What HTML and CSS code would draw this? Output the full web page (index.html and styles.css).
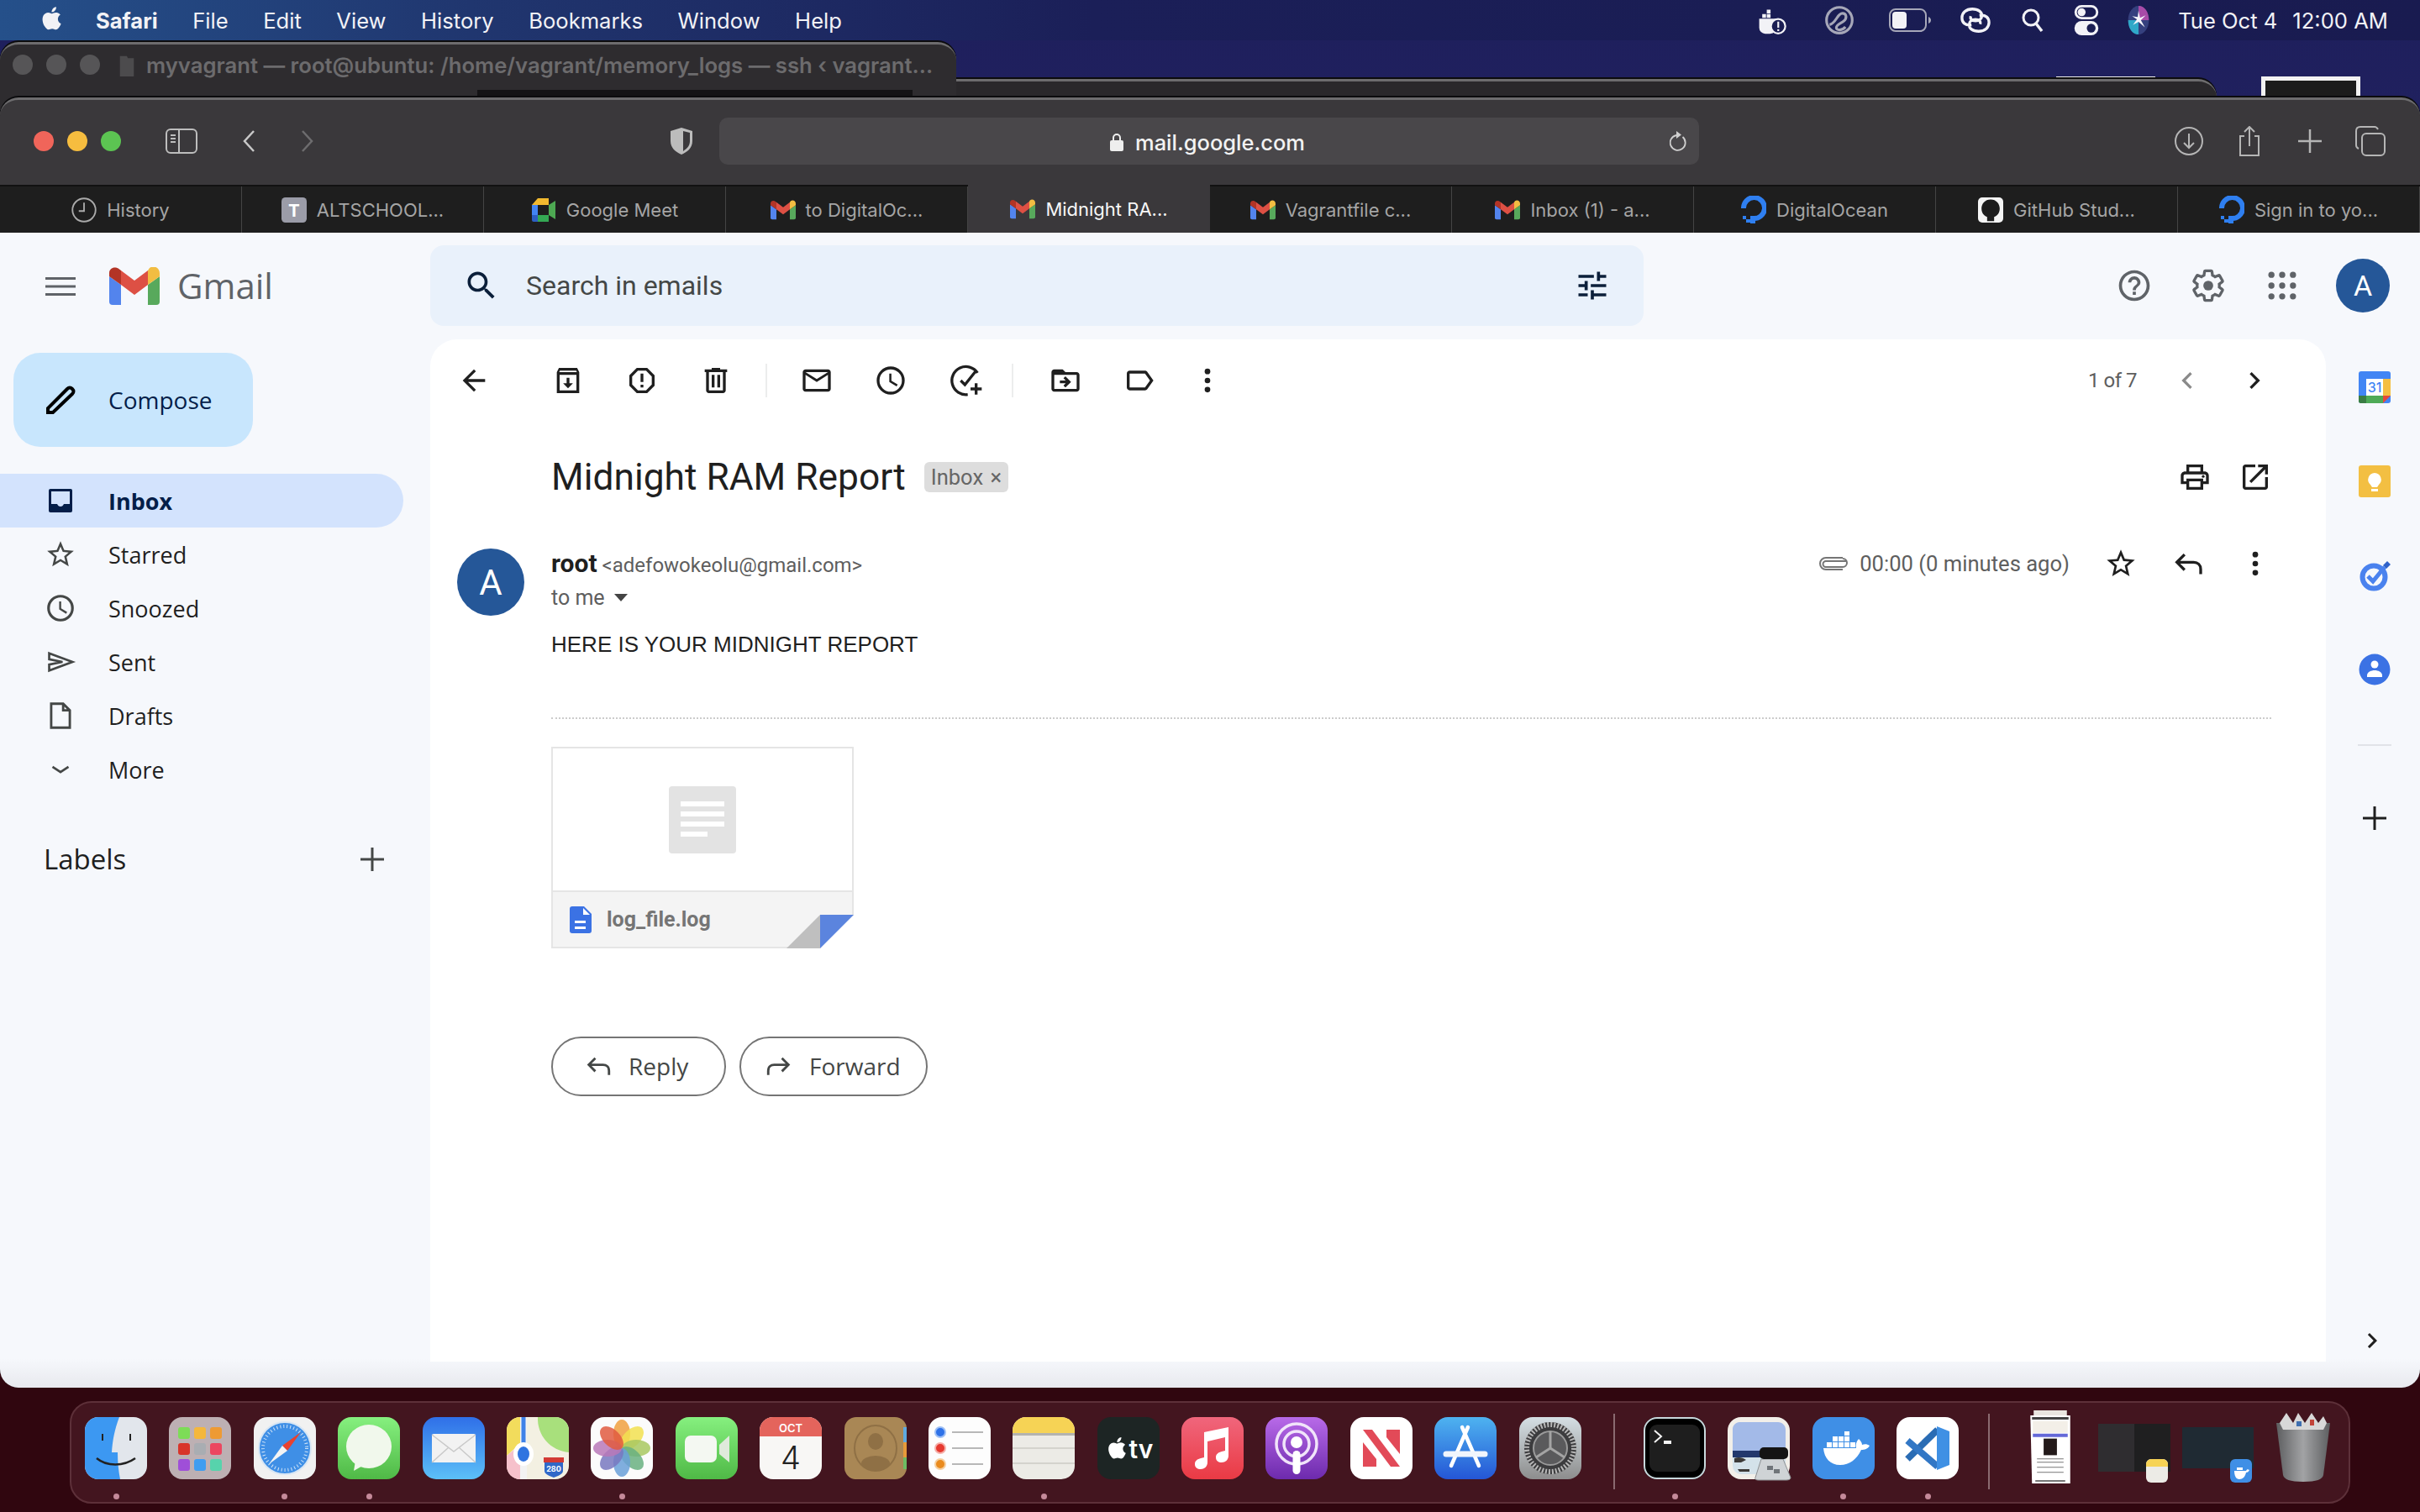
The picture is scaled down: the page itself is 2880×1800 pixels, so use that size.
FILE: index.html
```html
<!DOCTYPE html>
<html>
	<head>
		<meta charset="utf-8">
		<title>Midnight RAM Report</title>
		<link rel="stylesheet" href="styles.css">
	</head>

	<body>
		<svg class="defs" width="0" height="0">
			<defs>
				<linearGradient id="g-green" x1="0" y1="0" x2="0" y2="1"><stop offset="0" stop-color="#86f07f"/><stop offset="1" stop-color="#4fb946"/></linearGradient>
				<linearGradient id="g-mail" x1="0" y1="0" x2="0" y2="1"><stop offset="0" stop-color="#2f6fe8"/><stop offset="1" stop-color="#5cc0f8"/></linearGradient>
				<linearGradient id="g-music" x1="0" y1="0" x2="0" y2="1"><stop offset="0" stop-color="#f0667c"/><stop offset="1" stop-color="#ea3a44"/></linearGradient>
				<linearGradient id="g-pod" x1="0" y1="0" x2="0" y2="1"><stop offset="0" stop-color="#b86ae8"/><stop offset="1" stop-color="#6d2aad"/></linearGradient>
				<linearGradient id="g-store" x1="0" y1="0" x2="0" y2="1"><stop offset="0" stop-color="#4eb3f0"/><stop offset="1" stop-color="#2456d6"/></linearGradient>
				<linearGradient id="g-pref" x1="0" y1="0" x2="0" y2="1"><stop offset="0" stop-color="#d5dfe4"/><stop offset="1" stop-color="#8d8d8d"/></linearGradient>
				<linearGradient id="g-trash" x1="0" y1="0" x2="1" y2="0"><stop offset="0" stop-color="#5d5e60"/><stop offset=".5" stop-color="#a2a3a5"/><stop offset="1" stop-color="#5d5e60"/></linearGradient>
				<path id="apple" d="M18.700 12.600c0-2.600 2.100-3.800 2.200-3.900-1.200-1.800-3.100-2-3.700-2-1.600-.2-3.100.9-3.900.9s-2-.9-3.300-.9c-1.700 0-3.300 1-4.200 2.500-1.800 3.100-.5 7.700 1.300 10.200.9 1.200 1.900 2.600 3.200 2.600 1.300-.1 1.800-.8 3.300-.8s2 .8 3.300.8 2.200-1.200 3.100-2.500c1-1.400 1.400-2.800 1.400-2.900 0 0-2.700-1-2.700-4zM16.100 4.900c.7-.9 1.200-2.100 1.100-3.300-1 0-2.300.7-3 1.600-.6.800-1.200 2-1.100 3.200 1.200.1 2.300-.6 3-1.500z"/>
				<g id="m-logo">
					<path fill="#5384ed" d="M4 45h10V21L0 11v30a4 4 0 0 0 4 4z"/>
					<path fill="#58a95c" d="M46 45h10a4 4 0 0 0 4-4V11L46 21z"/>
					<path fill="#f2bd42" d="M46 4v17l14-10V7c0-6-7-10-12-6z"/>
					<path fill="#dd5044" d="M14 21V4l16 12L46 4v17L30 33z"/>
					<path fill="#b33426" d="M0 7v4l14 10V4l-2-1.500C7-1.500 0 1 0 7z"/>
				</g>
				<g id="do-logo">
					<path fill="none" stroke="#2f7ff0" stroke-width="6" d="M14 26A12.500 12.500 0 1 0 3 14"/>
					<path fill="#2f7ff0" d="M11 23h6v9h-6zM6 27h5v4H6zM2 23h4v4H2z"/>
				</g>
				<path id="reply" fill="none" stroke-width="2" d="M21 19.500V16c0-3-2-5-5-5H4M9.500 5.500 4 11l5.500 5.500"/>
				<path id="forward" fill="none" stroke-width="2" d="M3 19.500V16c0-3 2-5 5-5h12M14.500 5.500 20 11l-5.500 5.500"/>
				<path id="chev" d="M10 6 8.590 7.410 13.170 12l-4.580 4.590L10 18l6-6z"/>
			</defs>
		</svg>

		<header class="menubar">
			<svg class="apple" viewBox="0 0 24 24"><use href="#apple"/></svg>
			<nav class="menubar-items">
				<b>Safari</b>
				<span>File</span>
				<span>Edit</span>
				<span>View</span>
				<span>History</span>
				<span>Bookmarks</span>
				<span>Window</span>
				<span>Help</span>
			</nav>
			<div class="status">
				<svg class="st st-docker" viewBox="0 0 40 40"><path d="M4 18h24v10a10 10 0 0 1-10 10H12A8 8 0 0 1 4 30zM8 12h5v5H8zM14 12h5v5h-5zM14 6h5v5h-5z"/><circle cx="29" cy="28" r="9.500" fill="#1a1d52" stroke="#f2f2f6" stroke-width="2.500"/><path d="M28 22h2.400v8H28zM28 32h2.400v2.400H28z"/></svg>
				<svg class="st st-cc" viewBox="0 0 40 40"><circle cx="20" cy="20" r="17" fill="none" stroke="#a6a7b8" stroke-width="3.500"/><path fill="none" stroke="#a6a7b8" stroke-width="3.500" d="M7 26c9-2 10-15 17-15 6 0 6 7 2 10-3 3-10 4-10 9 0 4 8 4 12-1"/></svg>
				<svg class="st st-batt" viewBox="0 0 50 28"><rect x="1" y="1" width="43" height="26" rx="7" fill="none" stroke="#a6a7b8" stroke-width="2"/><rect x="4" y="4" width="17" height="20" rx="4" fill="#f2f2f6"/><path d="M47 10c2 1 3 2 3 4s-1 3-3 4z" fill="#a6a7b8"/></svg>
				<svg class="st st-link" viewBox="0 0 38 38"><path fill="none" stroke="#f2f2f6" stroke-width="3.500" d="M14 25c-8 1-12-3-12-9S7 5 15 5s12 4 12 8-3 7-8 7-7-3-6-6M24 13c8-1 12 3 12 9s-5 11-13 11-12-4-12-8 3-7 8-7 7 3 6 6"/></svg>
				<svg class="st st-search" viewBox="0 0 26 28"><circle cx="11" cy="11" r="9" fill="none" stroke="#f2f2f6" stroke-width="3"/><path stroke="#f2f2f6" stroke-width="3.500" d="m17 18 7 9"/></svg>
				<svg class="st st-control" viewBox="0 0 30 38"><rect x="1.500" y="1.500" width="27" height="15" rx="7.500" fill="none" stroke="#f2f2f6" stroke-width="3"/><circle cx="9" cy="9" r="5" fill="#f2f2f6"/><rect y="20" width="30" height="18" rx="9" fill="#f2f2f6"/><circle cx="21" cy="29" r="5.500" fill="#1a1d52"/></svg>
				<svg class="st st-siri" viewBox="0 0 26 38"><ellipse cx="13" cy="19" rx="13" ry="18" fill="#35407e"/><path d="M13 1c8 0 13 8 13 18L13 19z" fill="#a74ba8"/><path d="M0 19c0 10 5 18 13 18V19z" fill="#2fa8c8"/><path d="M13 7l2 9 7-3-6 6 5 9-8-7-7 4 5-7-6-4 7 1z" fill="#f4f4fa"/></svg>
				<span class="clock">Tue Oct 4</span>
				<span class="clock-time">12:00 AM</span>
			</div>
		</header>

		<div class="thumb thumb-a"></div>
		<div class="thumb thumb-b"><i></i></div>
		<div class="win win-back"></div>
		<div class="win win-term">
			<i class="dot-grey"></i>
			<i class="dot-grey"></i>
			<i class="dot-grey"></i>
			<svg class="term-folder" viewBox="0 0 28 44"><path d="M0 3h14l2 4h12v37H0z"/></svg>
			<span class="term-title">myvagrant — root@ubuntu: /home/vagrant/memory_logs — ssh ‹ vagrant...</span>
			<div class="term-inner"></div>
		</div>

		<main class="win safari">
			<div class="sf-toolbar">
				<i class="light red"></i>
				<i class="light yellow"></i>
				<i class="light green"></i>
				<svg class="sf-side" viewBox="0 0 38 30"><rect x="1" y="1" width="36" height="28" rx="5" fill="none" stroke="#bdbdbd" stroke-width="2"/><path stroke="#bdbdbd" stroke-width="2" d="M16 1v28"/><path stroke="#bdbdbd" stroke-width="2" d="M6 8h6M6 12h6M6 16h6"/></svg>
				<svg class="sf-chev sf-back" viewBox="0 0 16 26"><path fill="none" stroke="#c8c8c8" stroke-width="2.500" d="M14 1 3 13l11 12"/></svg>
				<svg class="sf-chev sf-fwd" viewBox="0 0 16 26"><path fill="none" stroke="#6d6c6e" stroke-width="2.500" d="m2 1 11 12L2 25"/></svg>
				<svg class="sf-shield" viewBox="0 0 26 32"><path d="M13 0 26 4v12c0 8-6 13-13 16C6 29 0 24 0 16V4z" fill="#bcbcbc"/><path d="M15 4v24c4-3 8-6 8-12V6z" fill="#3a383b"/></svg>
				<div class="urlbar">
					<span class="url">
						<svg class="lock" viewBox="0 0 16 22"><path fill="none" stroke="#eee" stroke-width="2" d="M4 10V6a4 4 0 0 1 8 0v4"/><rect y="9" width="16" height="13" rx="2" fill="#eee"/></svg>
						mail.google.com
					</span>
					<svg class="reload" viewBox="0 0 20 24"><path fill="none" stroke="#cfcfcf" stroke-width="1.800" d="M15.500 7A9 9 0 1 1 8 5"/><path fill="#cfcfcf" d="M8 0v9l6-4.500z"/></svg>
				</div>
				<div class="sf-right">
					<svg viewBox="0 0 36 36"><circle cx="18" cy="18" r="16" fill="none" stroke="#b5b5b5" stroke-width="2"/><path fill="none" stroke="#b5b5b5" stroke-width="2" d="M18 9v17M12 20l6 6 6-6"/></svg>
					<svg viewBox="0 0 36 36"><path fill="none" stroke="#b5b5b5" stroke-width="2" d="M12 12H7v23h22V12h-5M18 24V1M12 7l6-6 6 6"/></svg>
					<svg viewBox="0 0 36 36"><path fill="none" stroke="#b5b5b5" stroke-width="2.500" d="M18 4v28M4 18h28"/></svg>
					<svg viewBox="0 0 36 36"><rect x="8" y="9" width="27" height="26" rx="5" fill="none" stroke="#b5b5b5" stroke-width="2"/><path fill="none" stroke="#b5b5b5" stroke-width="2" d="M4 27c-2-1-3-2-3-4V6c0-3 2-5 5-5h17c2 0 3 1 4 3"/></svg>
				</div>
			</div>

			<div class="tabs">
				<div class="tab">
					<svg class="fav" viewBox="0 0 24 24"><circle cx="12" cy="12" r="11" fill="none" stroke="#aaa" stroke-width="1.500"/><path fill="none" stroke="#aaa" stroke-width="1.500" d="M12 5v8H7"/></svg>
					History
				</div>
				<div class="tab">
					<svg class="fav fav-t" viewBox="0 0 32 32"><rect width="32" height="32" rx="5" fill="#9b9ca8"/><text x="16" y="24" text-anchor="middle" class="fav-letter">T</text></svg>
					ALTSCHOOL...
				</div>
				<div class="tab">
					<svg class="fav" viewBox="0 0 30 30"><path fill="#f2b92f" d="M8 1h13v8H1z"/><path fill="#4285f4" d="M1 9h7v12H1z"/><path fill="#2c5fc4" d="M1 21h7v8H3a2 2 0 0 1-2-2z"/><path fill="#34a853" d="M8 21h13v8H8z"/><path fill="#4da852" d="M21 9l8-5v22l-8-5z"/></svg>
					Google Meet
				</div>
				<div class="tab">
					<svg class="fav fav-m" viewBox="0 0 60 45"><use href="#m-logo"/></svg>
					to DigitalOc...
				</div>
				<div class="tab tab-active">
					<svg class="fav fav-m" viewBox="0 0 60 45"><use href="#m-logo"/></svg>
					Midnight RA...
				</div>
				<div class="tab">
					<svg class="fav fav-m" viewBox="0 0 60 45"><use href="#m-logo"/></svg>
					Vagrantfile c...
				</div>
				<div class="tab">
					<svg class="fav fav-m" viewBox="0 0 60 45"><use href="#m-logo"/></svg>
					Inbox (1) - a...
				</div>
				<div class="tab">
					<svg class="fav fav-do" viewBox="0 0 30 32"><use href="#do-logo"/></svg>
					DigitalOcean
				</div>
				<div class="tab">
					<svg class="fav fav-do" viewBox="0 0 36 36"><rect width="36" height="36" rx="6" fill="#f4f4f4"/><path fill="#1c1c1c" d="M18 3C10 3 5 9 5 16c0 6 3 10 8 12v6h10v-6c5-2 8-6 8-12 0-7-5-13-13-13z"/></svg>
					GitHub Stud...
				</div>
				<div class="tab">
					<svg class="fav fav-do" viewBox="0 0 30 32"><use href="#do-logo"/></svg>
					Sign in to yo...
				</div>
			</div>

			<div class="gmail">
				<div class="gm-brand">
					<svg class="gm-menu" viewBox="0 0 36 24"><path d="M0 1h36v3H0zM0 10.500h36v3H0zM0 20h36v3H0z"/></svg>
					<svg class="gm-logo" viewBox="0 0 60 45"><use href="#m-logo"/></svg>
					<span class="gm-word">Gmail</span>
				</div>
				<div class="gm-head">
					<div class="searchbar">
						<svg class="ic ic-navy" viewBox="0 0 24 24"><path d="M15.500 14h-.79l-.28-.27C15.410 12.590 16 11.110 16 9.500 16 5.910 13.090 3 9.500 3S3 5.910 3 9.500 5.910 16 9.500 16c1.610 0 3.090-.59 4.230-1.570l.27.280v.79l5 4.990L20.490 19l-4.990-5zm-6 0C7.010 14 5 11.990 5 9.500S7.010 5 9.500 5 14 7.010 14 9.500 11.990 14 9.500 14z"/></svg>
						<span class="search-text">Search in emails</span>
						<svg class="ic ic-navy ic-tune" viewBox="0 0 24 24"><path d="M3 17v2h6v-2H3zM3 5v2h10V5H3zm10 16v-2h8v-2h-8v-2h-2v6h2zM7 9v2H3v2h4v2h2V9H7zm14 4v-2H11v2h10zm-6-4h2V7h4V5h-4V3h-2v6z"/></svg>
					</div>
					<div class="gm-actions">
						<svg class="ic ic-grey" viewBox="0 0 24 24"><path d="M11 18h2v-2h-2v2zm1-16C6.480 2 2 6.480 2 12s4.480 10 10 10 10-4.480 10-10S17.520 2 12 2zm0 18c-4.410 0-8-3.590-8-8s3.590-8 8-8 8 3.590 8 8-3.590 8-8 8zm0-14c-2.210 0-4 1.790-4 4h2c0-1.100.9-2 2-2s2 .9 2 2c0 2-3 1.750-3 5h2c0-2.250 3-2.500 3-5 0-2.210-1.790-4-4-4z"/></svg>
						<svg class="ic ic-grey" viewBox="0 0 24 24"><path fill="none" stroke="#5f6368" stroke-width="1.800" d="M19.140 12.940c.04-.3.060-.61.060-.94 0-.32-.02-.64-.07-.94l2.030-1.580c.18-.14.23-.41.12-.61l-1.920-3.320c-.12-.22-.37-.29-.59-.22l-2.390.96c-.5-.38-1.030-.7-1.620-.94l-.36-2.540c-.04-.24-.24-.41-.48-.41h-3.840c-.24 0-.43.17-.47.41l-.36 2.540c-.59.24-1.130.57-1.620.94l-2.390-.96c-.22-.08-.47 0-.59.22L2.740 8.870c-.12.21-.08.47.12.61l2.030 1.580c-.05.3-.09.63-.09.94s.02.64.07.94l-2.030 1.580c-.18.14-.23.41-.12.61l1.920 3.320c.12.22.37.29.59.22l2.390-.96c.5.38 1.030.7 1.620.94l.36 2.540c.05.24.24.41.48.41h3.840c.24 0 .44-.17.47-.41l.36-2.540c.59-.24 1.130-.56 1.620-.94l2.390.96c.22.08.47 0 .59-.22l1.920-3.320c.12-.22.07-.47-.12-.61l-2.010-1.580z"/><circle cx="12" cy="12" r="3.200"/></svg>
						<svg class="ic ic-grey" viewBox="0 0 24 24"><circle cx="5" cy="5" r="2"/><circle cx="12" cy="5" r="2"/><circle cx="19" cy="5" r="2"/><circle cx="5" cy="12" r="2"/><circle cx="12" cy="12" r="2"/><circle cx="19" cy="12" r="2"/><circle cx="5" cy="19" r="2"/><circle cx="12" cy="19" r="2"/><circle cx="19" cy="19" r="2"/></svg>
						<span class="avatar avatar-top">A</span>
					</div>
				</div>

				<aside class="nav">
					<button class="compose">
						<svg class="nav-ic" viewBox="0 0 36 36"><path fill="none" stroke="#000" stroke-width="4" d="M3 33v-5L26 5c2-2 4-2 6 0s2 4 0 6L9 33z"/></svg>
						Compose
					</button>
					<ul class="nav-list">
						<li class="nav-item is-active">
							<svg class="nav-ic" viewBox="0 0 38 38"><rect x="5" y="5" width="28" height="28" rx="2" fill="#041e49"/><path fill="#d3e3fd" d="M8 8h22v15h-7c-1 2-2 3-4 3s-3-1-4-3H8z"/></svg>
							Inbox
						</li>
						<li class="nav-item">
							<svg class="nav-ic" viewBox="0 0 24 24"><path d="M22 9.240l-7.190-.62L12 2 9.190 8.630 2 9.240l5.460 4.730L5.820 21 12 17.270 18.180 21l-1.630-7.030L22 9.240zM12 15.400l-3.760 2.270 1-4.280-3.320-2.880 4.380-.38L12 6.100l1.710 4.040 4.380.38-3.320 2.880 1 4.280L12 15.400z"/></svg>
							Starred
						</li>
						<li class="nav-item">
							<svg class="nav-ic" viewBox="0 0 24 24"><path d="M12 2a10 10 0 1 0 0 20 10 10 0 0 0 0-20zm0 18a8 8 0 1 1 0-16 8 8 0 0 1 0 16zm.5-13H11v6l5.200 3.200.8-1.300-4.500-2.700V7z"/></svg>
							Snoozed
						</li>
						<li class="nav-item">
							<svg class="nav-ic" viewBox="0 0 24 24"><path fill="none" stroke="#444746" stroke-width="1.700" d="M3.500 5.500 21 12 3.500 18.500V14l10-2-10-2z"/></svg>
							Sent
						</li>
						<li class="nav-item">
							<svg class="nav-ic" viewBox="0 0 24 24"><path fill="none" stroke="#444746" stroke-width="1.800" d="M5 3h9l5 5v13H5zM14 3v5h5"/></svg>
							Drafts
						</li>
						<li class="nav-item">
							<svg class="nav-ic" viewBox="0 0 24 24"><path fill="none" stroke="#444746" stroke-width="1.700" d="m6 10 6 4 6-4"/></svg>
							More
						</li>
					</ul>
					<div class="labels">
						<span>Labels</span>
						<svg class="labels-add" viewBox="0 0 28 28"><path stroke="#444746" stroke-width="3" d="M14 0v28M0 14h28"/></svg>
					</div>
				</aside>

				<section class="panel">
					<div class="mail-tools">
						<span class="tool tool-back"><svg class="ic ic-dark" viewBox="0 0 24 24"><path d="M20 11H7.830l5.590-5.590L12 4l-8 8 8 8 1.410-1.410L7.830 13H20v-2z"/></svg></span>
						<span class="tool"><svg class="ic ic-dark" viewBox="0 0 24 24"><path d="M20 6l-1.500-3h-13L4 6v15h16V6zM6.200 5h11.600l.5 1H5.700zM6 19V8h12v11H6zm7-9h-2v4H8.500l3.500 3.500 3.500-3.500H13z"/></svg></span>
						<span class="tool"><svg class="ic ic-dark" viewBox="0 0 24 24"><path d="M15.730 3H8.270L3 8.270v7.460L8.270 21h7.460L21 15.730V8.270L15.730 3zM19 14.900 14.900 19H9.100L5 14.900V9.100L9.100 5h5.800L19 9.100v5.800zM11 7h2v6h-2zm0 8h2v2h-2z"/></svg></span>
						<span class="tool"><svg class="ic ic-dark" viewBox="0 0 24 24"><path d="M15 4V3H9v1H4v2h1v13c0 1.100.9 2 2 2h10c1.100 0 2-.9 2-2V6h1V4h-5zm2 15H7V6h10v13zM9 8h2v9H9zm4 0h2v9h-2z"/></svg></span>
						<i class="tool-sep"></i>
						<span class="tool"><svg class="ic ic-dark" viewBox="0 0 24 24"><path d="M22 6c0-1.100-.9-2-2-2H4c-1.100 0-2 .9-2 2v12c0 1.100.9 2 2 2h16c1.100 0 2-.9 2-2V6zm-2 0-8 5-8-5h16zm0 12H4V8l8 5 8-5v10z"/></svg></span>
						<span class="tool"><svg class="ic ic-dark" viewBox="0 0 24 24"><path d="M12 2a10 10 0 1 0 0 20 10 10 0 0 0 0-20zm0 18a8 8 0 1 1 0-16 8 8 0 0 1 0 16zm.5-13H11v6l5.200 3.200.8-1.300-4.500-2.700V7z"/></svg></span>
						<span class="tool"><svg class="ic ic-task" viewBox="0 0 24 24"><path fill="none" stroke="#1f1f1f" stroke-width="2" d="M20 6.500A10 10 0 1 0 13 22M8 12l3 3 8-10M19 14v8M15 18h8"/></svg></span>
						<i class="tool-sep tool-sep-b"></i>
						<span class="tool"><svg class="ic ic-dark" viewBox="0 0 24 24"><path d="M20 6h-8l-2-2H4c-1.100 0-2 .9-2 2v12c0 1.100.9 2 2 2h16c1.100 0 2-.9 2-2V8c0-1.100-.9-2-2-2zm0 12H4V8h16v10zm-8.010-9-1.410 1.410L12.160 12H8v2h4.160l-1.590 1.590L11.990 17 16 13.010 11.990 9z"/></svg></span>
						<span class="tool"><svg class="ic ic-dark" viewBox="0 0 24 24"><path d="M17.630 5.840C17.270 5.330 16.670 5 16 5L5 5.010C3.900 5.010 3 5.900 3 7v10c0 1.100.9 1.990 2 1.990L16 19c.67 0 1.270-.33 1.630-.84L22 12l-4.370-6.160zM16 17H5V7h11l3.550 5L16 17z"/></svg></span>
						<span class="tool tool-tight"><svg class="ic ic-dark" viewBox="0 0 24 24"><circle cx="12" cy="5.500" r="2"/><circle cx="12" cy="12" r="2"/><circle cx="12" cy="18.500" r="2"/></svg></span>
						<div class="pager">
							<span>1 of 7</span>
							<svg class="ic ic-older" viewBox="0 0 24 24"><use href="#chev" transform="matrix(-1 0 0 1 24 0)"/></svg>
							<svg class="ic ic-dark" viewBox="0 0 24 24"><use href="#chev"/></svg>
						</div>
					</div>

					<div class="subject-row">
						<h1>Midnight RAM Report</h1>
						<span class="chip">Inbox <em>×</em></span>
						<div class="subject-actions">
							<svg class="ic ic-dark" viewBox="0 0 24 24"><path d="M19 8h-1V3H6v5H5c-1.660 0-3 1.340-3 3v6h4v4h12v-4h4v-6c0-1.660-1.340-3-3-3zM8 5h8v3H8V5zm8 12v2H8v-4h8v2zm2-2v-2H6v2H4v-4c0-.55.45-1 1-1h14c.55 0 1 .45 1 1v4h-2z"/><circle cx="18" cy="11.500" r="1"/></svg>
							<svg class="ic ic-dark" viewBox="0 0 24 24"><path d="M19 19H5V5h7V3H5c-1.110 0-2 .9-2 2v14c0 1.100.89 2 2 2h14c1.100 0 2-.9 2-2v-7h-2v7zM14 3v2h3.590l-9.830 9.830 1.410 1.410L19 6.410V10h2V3h-7z"/></svg>
						</div>
					</div>

					<article class="message">
						<span class="avatar avatar-msg">A</span>
						<div class="msg-body">
							<div class="msg-head">
								<div class="sender"><b>root</b> <span>&lt;adefowokeolu@gmail.com&gt;</span></div>
								<div class="msg-meta">
									<svg class="clip" viewBox="0 0 34 20"><path fill="none" stroke="#757575" stroke-width="2" d="M33 7H8a3.500 3.500 0 0 0 0 7h20a5 5 0 0 0 0-10M28 17H8A7 7 0 0 1 8 3h20"/></svg>
									<span class="msg-time">00:00 (0 minutes ago)</span>
									<svg class="ic ic-dark" viewBox="0 0 24 24"><path d="M22 9.240l-7.190-.62L12 2 9.190 8.630 2 9.240l5.460 4.730L5.820 21 12 17.270 18.180 21l-1.630-7.030L22 9.240zM12 15.400l-3.760 2.270 1-4.280-3.320-2.880 4.380-.38L12 6.100l1.710 4.040 4.380.38-3.320 2.880 1 4.280L12 15.400z"/></svg>
									<svg class="ic ic-stroke" viewBox="0 0 24 24"><use href="#reply"/></svg>
									<svg class="ic ic-dark" viewBox="0 0 24 24"><circle cx="12" cy="5.500" r="2"/><circle cx="12" cy="12" r="2"/><circle cx="12" cy="18.500" r="2"/></svg>
								</div>
							</div>
							<div class="to-me">to me <i class="caret"></i></div>
							<p class="msg-text">HERE IS YOUR MIDNIGHT REPORT</p>
							<hr class="dotted">
							<div class="attachment">
								<div class="att-preview">
									<div class="att-doc"><i></i><i></i><i></i><i></i></div>
								</div>
								<div class="att-foot">
									<svg class="att-file" viewBox="0 0 26 32"><path fill="#3b72e4" d="M3 0h14l9 9v20a3 3 0 0 1-3 3H3a3 3 0 0 1-3-3V3a3 3 0 0 1 3-3z"/><path fill="#fff" d="M16 2v8h8zM6 17h13v3H6zM6 24h13v3H6z"/></svg>
									<span>log_file.log</span>
								</div>
								<svg class="att-fold" viewBox="0 0 80 40"><path fill="#fff" d="M80 0v40H40z"/><path fill="#bfbfbf" d="M0 40 40 0v40z"/><path fill="#5b84de" d="M40 0h40L40 40z"/></svg>
							</div>
							<div class="reply-row">
								<button class="pill pill-reply"><svg viewBox="0 0 24 24"><use href="#reply"/></svg>Reply</button>
								<button class="pill pill-forward"><svg viewBox="0 0 24 24"><use href="#forward"/></svg>Forward</button>
							</div>
						</div>
					</article>
				</section>

				<aside class="rail">
					<svg class="rail-ic" viewBox="0 0 38 38"><rect width="38" height="38" rx="3" fill="#4285f4"/><path fill="#f4bf42" d="M29 9h9v20h-9z"/><path fill="#4eaa57" d="M0 29h29v9H3a3 3 0 0 1-3-3z"/><path fill="#3a7d44" d="M0 29h9v9H3a3 3 0 0 1-3-3z"/><path fill="#e5493a" d="M29 29h9l-9 9z"/><path fill="#fff" d="M9 9h20v20H9z"/><text x="19" y="25" text-anchor="middle" class="cal-num">31</text></svg>
					<svg class="rail-ic" viewBox="0 0 38 38"><rect width="38" height="38" rx="3" fill="#f3bf42"/><path fill="#fff" d="M19 9a8 8 0 0 0-5 14l2 3h6l2-3a8 8 0 0 0-5-14z"/><path fill="#fff" d="M15 28h8v3h-8z"/></svg>
					<svg class="rail-ic" viewBox="0 0 38 38"><circle cx="18" cy="21" r="13.500" fill="none" stroke="#4a82ee" stroke-width="6"/><path fill="none" stroke="#4a82ee" stroke-width="5" d="m11 20 6 6 14-17"/><path fill="#2f62c9" d="m29 7 5-5 4 4-5 5z"/></svg>
					<svg class="rail-ic" viewBox="0 0 38 38"><circle cx="19" cy="19" r="18.500" fill="#3b72e4"/><circle cx="19" cy="13" r="4.500" fill="#fff"/><path fill="#fff" d="M10 28v-2c0-4 5-6 9-6s9 2 9 6v2z"/></svg>
					<i class="rail-sep"></i>
					<svg class="rail-add" viewBox="0 0 28 28"><path stroke="#1f1f1f" stroke-width="3" d="M14 0v28M0 14h28"/></svg>
					<svg class="rail-more" viewBox="0 0 24 24"><use href="#chev"/></svg>
				</aside>
			</div>
		</main>

		<footer class="dock">
			<div class="dock-item on">
				<svg viewBox="0 0 74 74"><rect width="74" height="74" rx="16" fill="#e2e6ec"/><path fill="#3c98f2" d="M16 0h25c-6 16-8 28-9 42h7c0 12 1 22 3 32H16A16 16 0 0 1 0 58V16A16 16 0 0 1 16 0z"/><path stroke="#222" stroke-width="2" d="M21 20v8M54 20v8"/><path fill="none" stroke="#222" stroke-width="2.500" d="M14 49c12 10 32 10 46 0"/></svg>
			</div>
			<div class="dock-item">
				<svg viewBox="0 0 74 74"><rect width="74" height="74" rx="16" fill="#bdb0b3"/><rect x="11" y="12" width="14" height="14" rx="3" fill="#7ddc57"/><rect x="30" y="12" width="14" height="14" rx="3" fill="#f4b73c"/><rect x="49" y="12" width="14" height="14" rx="3" fill="#ee9a33"/><rect x="11" y="31" width="14" height="14" rx="3" fill="#d8342a"/><rect x="30" y="31" width="14" height="14" rx="3" fill="#a9adb2"/><rect x="49" y="31" width="14" height="14" rx="3" fill="#ec4660"/><rect x="11" y="50" width="14" height="14" rx="3" fill="#9f4fd8"/><rect x="30" y="50" width="14" height="14" rx="3" fill="#3f9df0"/><rect x="49" y="50" width="14" height="14" rx="3" fill="#57d3ac"/></svg>
			</div>
			<div class="dock-item on">
				<svg viewBox="0 0 74 74"><rect width="74" height="74" rx="16" fill="#f1f1f1"/><circle cx="37" cy="37" r="31" fill="#3f8fe6" stroke="#d8e6f4" stroke-width="2"/><circle cx="37" cy="37" r="26" fill="none" stroke="#cfe3f7" stroke-width="4" stroke-dasharray="1 3"/><path fill="#e9412f" d="m56 18-16 22-6-6z"/><path fill="#f4f4f4" d="m18 56 16-22 6 6z"/></svg>
			</div>
			<div class="dock-item on">
				<svg viewBox="0 0 74 74"><rect width="74" height="74" rx="16" fill="url(#g-green)"/><ellipse cx="37" cy="35" rx="27" ry="26" fill="#f1f8ec"/><path fill="#f1f8ec" d="m21 52-2 12 14-8z"/></svg>
			</div>
			<div class="dock-item">
				<svg viewBox="0 0 74 74"><rect width="74" height="74" rx="16" fill="url(#g-mail)"/><rect x="11" y="20" width="52" height="34" rx="2" fill="#f2f2f2"/><path fill="none" stroke="#c9c9c9" stroke-width="1.500" d="m11 21 26 20 26-20M11 54l20-18M63 54 43 36"/></svg>
			</div>
			<div class="dock-item">
				<svg viewBox="0 0 74 74"><rect width="74" height="74" rx="16" fill="#f3f0e2"/><path fill="#a8e07c" d="M37 0h21c9 0 16 7 16 16v26C52 40 36 22 37 0z"/><path fill="#f2dc5c" d="M0 16v30l22-20V0H16A16 16 0 0 0 0 16z"/><path fill="#f6c1cb" d="M0 46v12c0 9 7 16 16 16h4V30z"/><path fill="none" stroke="#f3f3f3" stroke-width="8" d="M20 0v74"/><path fill="none" stroke="#3f82e8" stroke-width="5" d="M20 0v36"/><ellipse cx="20" cy="44" rx="12" ry="14" fill="#fff"/><ellipse cx="20" cy="44" rx="7" ry="9" fill="#2f74e0"/><path fill="#d33a35" d="M44 48h24v6H44z"/><path fill="#3068c8" d="M45 54h22v10c0 4-6 6-11 8-5-2-11-4-11-8z"/><text x="56" y="65" text-anchor="middle" class="map-num">280</text></svg>
			</div>
			<div class="dock-item on">
				<svg class="photos" viewBox="0 0 74 74"><rect width="74" height="74" rx="16" fill="#fbfbfb"/><ellipse cx="37" cy="20" rx="10" ry="17" fill="#f0a040"/><ellipse cx="37" cy="20" rx="10" ry="17" fill="#f2e050" transform="rotate(45 37 37)"/><ellipse cx="37" cy="20" rx="10" ry="17" fill="#a8c860" transform="rotate(90 37 37)"/><ellipse cx="37" cy="20" rx="10" ry="17" fill="#68b080" transform="rotate(135 37 37)"/><ellipse cx="37" cy="20" rx="10" ry="17" fill="#6aa0d8" transform="rotate(180 37 37)"/><ellipse cx="37" cy="20" rx="10" ry="17" fill="#7878c0" transform="rotate(225 37 37)"/><ellipse cx="37" cy="20" rx="10" ry="17" fill="#b878b8" transform="rotate(270 37 37)"/><ellipse cx="37" cy="20" rx="10" ry="17" fill="#e05a40" transform="rotate(315 37 37)"/></svg>
			</div>
			<div class="dock-item">
				<svg viewBox="0 0 74 74"><rect width="74" height="74" rx="16" fill="url(#g-green)"/><rect x="11" y="22" width="38" height="32" rx="7" fill="#f4f8f2"/><path fill="#dfeadb" d="m52 33 12-11v32L52 44z"/></svg>
			</div>
			<div class="dock-item">
				<svg viewBox="0 0 74 74"><rect width="74" height="74" rx="16" fill="#f8f7f5"/><path fill="#e4645c" d="M16 0h42c9 0 16 7 16 16v7H0v-7C0 7 7 0 16 0z"/><text x="37" y="18" text-anchor="middle" class="cal-oct">OCT</text><text x="37" y="62" text-anchor="middle" class="cal-day">4</text></svg>
			</div>
			<div class="dock-item">
				<svg viewBox="0 0 74 74"><rect width="74" height="74" rx="14" fill="#a98755"/><path fill="#5ea9e0" d="M70 12h4v18h-4z"/><path fill="#e79a3a" d="M70 30h4v18h-4z"/><path fill="#6cbc62" d="M70 48h4v14h-4z"/><ellipse cx="37" cy="37" rx="25" ry="27" fill="none" stroke="#8f7045" stroke-width="2"/><ellipse cx="37" cy="29" rx="9" ry="10" fill="#8f7045"/><ellipse cx="37" cy="55" rx="17" ry="9" fill="#8f7045"/></svg>
			</div>
			<div class="dock-item">
				<svg viewBox="0 0 74 74"><rect width="74" height="74" rx="16" fill="#fdfdfd"/><circle cx="14" cy="18" r="6" fill="#2f72e8" stroke="#9fc0f5" stroke-width="2"/><circle cx="14" cy="37" r="6" fill="#e6392f" stroke="#f5b0aa" stroke-width="2"/><circle cx="14" cy="56" r="6" fill="#ea8b1e" stroke="#f6cf9f" stroke-width="2"/><path stroke="#b8b8b8" stroke-width="2" d="M28 18h37M28 37h37M28 56h37"/></svg>
			</div>
			<div class="dock-item on">
				<svg viewBox="0 0 74 74"><rect width="74" height="74" rx="16" fill="#ecebe6"/><path fill="#f6d355" d="M16 0h42c9 0 16 7 16 16v3H0v-3C0 7 7 0 16 0z"/><path fill="#b3b3af" d="M0 19h74v3H0z"/><path stroke="#d4d3cd" stroke-width="2" d="M0 37h74M0 55h74"/></svg>
			</div>
			<div class="dock-item">
				<svg viewBox="0 0 74 74"><rect width="74" height="74" rx="16" fill="#1d2524"/><svg x="7" y="22" width="30" height="30" viewBox="0 0 24 24"><use href="#apple" fill="#fff"/></svg><text x="52" y="49" text-anchor="middle" class="tv-text">tv</text></svg>
			</div>
			<div class="dock-item">
				<svg viewBox="0 0 74 74"><rect width="74" height="74" rx="16" fill="url(#g-music)"/><path fill="#fff" d="M27 18 56 12v34c0 5-4 8-8 8s-7-2-7-6 3-6 7-7l4-1V24l-21 5v25c0 5-4 8-8 8s-7-2-7-6 3-6 7-7l4-1z"/></svg>
			</div>
			<div class="dock-item">
				<svg viewBox="0 0 74 74"><rect width="74" height="74" rx="16" fill="url(#g-pod)"/><circle cx="37" cy="32" r="24" fill="none" stroke="#f1e4fa" stroke-width="3.500"/><circle cx="37" cy="32" r="15" fill="none" stroke="#f1e4fa" stroke-width="3.500"/><circle cx="37" cy="30" r="7" fill="#fff"/><rect x="32.500" y="40" width="9" height="28" rx="4.500" fill="#fff"/></svg>
			</div>
			<div class="dock-item">
				<svg viewBox="0 0 74 74"><rect width="74" height="74" rx="16" fill="#fff"/><path fill="#e24a58" d="M15 15h11l33 44H48zM15 30l16 20v9H15zM43 15h16v29L43 24z"/></svg>
			</div>
			<div class="dock-item">
				<svg viewBox="0 0 74 74"><rect width="74" height="74" rx="16" fill="url(#g-store)"/><path fill="none" stroke="#fff" stroke-width="4.500" stroke-linecap="round" d="M40 12 20 58M33 12l20 46"/><path fill="none" stroke="#f0f5fc" stroke-width="7" stroke-linecap="round" d="M14 44h46"/></svg>
			</div>
			<div class="dock-item">
				<svg viewBox="0 0 74 74"><rect width="74" height="74" rx="16" fill="url(#g-pref)"/><circle cx="37" cy="37" r="31" fill="#3c3c3e"/><circle cx="37" cy="37" r="28" fill="none" stroke="#b8b8b8" stroke-width="6" stroke-dasharray="2 2"/><circle cx="37" cy="37" r="20" fill="#5a5a5c" stroke="#9a9a9a" stroke-width="2"/><path stroke="#a4a4a4" stroke-width="3" d="M37 37V17M37 37l17 11M37 37 20 48"/></svg>
			</div>
			<i class="dock-sep"></i>
			<div class="dock-item on">
				<svg viewBox="0 0 74 74"><rect width="74" height="74" rx="16" fill="#000"/><rect x="1" y="1" width="72" height="72" rx="15" fill="none" stroke="#c8d8dc" stroke-width="2"/><rect x="7" y="9" width="60" height="56" rx="9" fill="#1e1e1e"/><path fill="none" stroke="#f4f4f4" stroke-width="2" d="m13 16 8 7-8 7"/><path fill="#f4f4f4" d="M24 28h9v4h-9z"/></svg>
			</div>
			<div class="dock-item">
				<svg viewBox="0 0 74 74"><rect width="74" height="74" rx="16" fill="#f2efe9"/><path fill="#a3bae8" d="M14 6h46c5 0 9 4 9 9v25H6V14c0-4 4-8 8-8z"/><path fill="#23386c" d="M6 40h63v9H6z"/><path fill="#d4e2ea" d="M6 48h63v20H16A10 10 0 0 1 6 58z"/><path fill="#3d3a38" d="M8 49c5-2 10-1 14 2l-6 3H8zM12 62h14v3H14z"/><path fill="#cfd3d6" stroke="#8d9093" d="M40 50h26l9 22c0 2-2 3-5 3H37c-3 0-5-1-4-3z"/><path fill="#70757a" d="M47 58h7v5h-7zM55 62h7v5h-7z"/><rect x="38" y="36" width="34" height="14" rx="5" fill="#141414"/></svg>
			</div>
			<div class="dock-item on">
				<svg viewBox="0 0 74 74"><rect width="74" height="74" rx="16" fill="#3f8fe6"/><path fill="#fff" d="M13 37h39c-1-4 0-8 3-11 2 2 4 4 4 7 3-1 6-1 9 1-2 4-6 5-10 5-5 11-14 18-25 18-12 0-19-8-20-20z"/><path fill="#fff" d="M17 30h6v6h-6zM24 30h6v6h-6zM31 30h6v6h-6zM38 30h6v6h-6zM45 30h6v6h-6zM24 23h6v6h-6zM31 23h6v6h-6zM38 23h6v6h-6zM38 17h6v5h-6z"/></svg>
			</div>
			<div class="dock-item on">
				<svg viewBox="0 0 74 74"><rect width="74" height="74" rx="16" fill="#fff"/><path fill="none" stroke="#2a6cb4" stroke-width="8" d="M13 50 49 15"/><path fill="none" stroke="#3277c5" stroke-width="8" d="M13 28 49 59"/><path fill="#3f90e4" d="M48 11l15 6v40l-15 6z"/></svg>
			</div>
			<i class="dock-sep dock-sep-b"></i>
			<div class="dock-stack">
				<svg class="stack-doc" viewBox="0 0 48 88"><path fill="#e9e6e0" d="M4 0h40v6H4z"/><path fill="#fff" d="M0 6h48v82H2z"/><path fill="#444" d="M2 8h44v3H2z"/><path fill="#f3efe8" d="M3 13h42v14H3z"/><path fill="#6468d8" d="M3 28h42v4H3z"/><path fill="#231a1a" d="M16 34h16v20H16z"/><path fill="#777" d="M8 58h32v1H8zM8 62h32v1H8zM8 68h32v1H8zM8 74h32v1H8zM6 84h36v2H6z"/></svg>
				<div class="stack-win stack-notes">
					<svg viewBox="0 0 26 28"><rect width="26" height="28" rx="6" fill="#ecebe6"/><path fill="#f6d355" d="M6 0h14c3 0 6 3 6 6v3H0V6c0-3 3-6 6-6z"/></svg>
				</div>
				<div class="stack-win stack-docker">
					<svg viewBox="0 0 26 28"><rect width="26" height="28" rx="6" fill="#3f8fe6"/><path fill="#fff" d="M5 14h14c1-2 2-2 4-1-1 2-2 3-4 3-1 5-4 8-8 8-4 0-6-4-6-10zM8 10h7v3H8z"/></svg>
				</div>
			</div>
			<svg class="trash" viewBox="0 0 64 84"><path fill="url(#g-trash)" d="M0 14h64l-8 62c-1 5-8 8-24 8S9 81 8 76z"/><path fill="#d8d8d8" d="M4 14 12 2l8 12 6-12 8 12 8-12 8 12 6-8 4 8-4 8H8z"/><path fill="#3f6fb0" d="M24 12h6v6h-6z"/><path fill="#c2443a" d="M40 10h5v7h-5z"/></svg>
		</footer>
	</body>
</html>
```

FILE: styles.css
```css
* {
	box-sizing: border-box;
}
html,
body {
	margin: 0;
	height: 1800px;
	overflow: hidden;
}
body {
	position: relative;
	width: 2880px;
	font-family: "Inter", "Liberation Sans", sans-serif;
	background: linear-gradient(180deg, #1e1f5c 0, #272668 600px, #30060f 1640px, #30060f 100%);
}
i,
em {
	font-style: normal;
}
ul {
	margin: 0;
	padding: 0;
	list-style: none;
}
button {
	font: inherit;
	background: none;
	border: 0;
	padding: 0;
}
.defs {
	position: absolute;
}

/* menu bar */
.menubar {
	display: flex;
	align-items: center;
	height: 48px;
	padding-left: 44px;
	color: #f2f2f6;
	font-size: 25.600px;
	background: linear-gradient(90deg, #25508a 0, #20366f 560px, #1b1f58 1300px, #191b50 100%);
}
.apple {
	width: 32px;
	height: 36px;
	margin-top: -4px;
	fill: #f2f2f6;
}
.menubar-items {
	display: flex;
	gap: 41.500px;
	margin-left: 38px;
}
.status {
	display: flex;
	align-items: center;
	margin-left: auto;
	padding-right: 38px;
}
.st {
	height: 36px;
	fill: #f2f2f6;
}
.st-docker {
	width: 40px;
}
.st-cc {
	width: 40px;
	margin-left: 41px;
}
.st-batt {
	width: 50px;
	height: 28px;
	margin-left: 39px;
}
.st-link {
	width: 38px;
	margin-left: 34px;
}
.st-search {
	width: 26px;
	margin-left: 36px;
}
.st-control {
	width: 30px;
	margin-left: 36px;
}
.st-siri {
	width: 26px;
	margin-left: 34px;
}
.clock {
	margin-left: 34px;
}
.clock-time {
	margin-left: 18px;
}

/* windows on the desktop */
.win {
	position: absolute;
	border-radius: 22px 22px 0 0;
	border-top: 3px solid #6d6c6e;
	box-shadow: 0 -2px 0 #0b0b0d;
}
.thumb {
	position: absolute;
	top: 91px;
	height: 40px;
	background: #f2f2f2;
}
.thumb-a {
	left: 2447px;
	width: 118px;
}
.thumb-b {
	left: 2691px;
	width: 118px;
	padding: 5px;
}
.thumb-b i {
	display: block;
	height: 40px;
	background: #1c1c1c;
}
.win-back {
	top: 94px;
	left: 1100px;
	width: 1538px;
	height: 60px;
	background: #2a282b;
}
.win-term {
	top: 50px;
	left: 0;
	width: 1138px;
	height: 100px;
	display: flex;
	align-items: flex-start;
	padding: 12px 0 0 15px;
	gap: 16px;
	background: #2e2c2f;
}
.dot-grey {
	width: 24px;
	height: 24px;
	border-radius: 50%;
	background: #565557;
}
.term-folder {
	width: 28px;
	height: 26px;
	fill: #4c4b4d;
	margin-left: 2px;
	margin-right: -7px;
}
.term-title {
	font-size: 25.700px;
	font-weight: 600;
	line-height: 26px;
	color: #6c6b6d;
	white-space: nowrap;
}
.term-inner {
	position: absolute;
	top: 54px;
	left: 568px;
	width: 518px;
	height: 20px;
	background: #141315;
}

/* safari */
.safari {
	top: 116px;
	left: 0;
	width: 2880px;
	height: 1536px;
	display: flex;
	flex-direction: column;
	overflow: hidden;
	border-radius: 22px;
	background: #3a383b;
}
.sf-toolbar {
	display: flex;
	align-items: center;
	flex: none;
	height: 101px;
	padding: 0 0 4px 40px;
}
.light {
	width: 24px;
	height: 24px;
	margin-right: 16px;
	border-radius: 50%;
}
.red {
	background: #f0655a;
}
.yellow {
	background: #f6bd3f;
}
.green {
	background: #5cc452;
}
.sf-side {
	width: 38px;
	height: 30px;
	margin-left: 37px;
}
.sf-chev {
	width: 16px;
	height: 26px;
}
.sf-back {
	margin-left: 53px;
}
.sf-fwd {
	margin-left: 54px;
}
.sf-shield {
	width: 26px;
	height: 32px;
	margin-left: 424px;
}
.urlbar {
	display: flex;
	align-items: center;
	justify-content: center;
	position: relative;
	width: 1166px;
	height: 56px;
	margin-left: 32px;
	border-radius: 10px;
	background: #49474a;
}
.url {
	display: flex;
	align-items: center;
	gap: 14px;
	padding: 3px 4px 0 0;
	color: #f2f2f2;
	font-size: 25.500px;
	font-weight: 500;
}
.lock {
	width: 16px;
	height: 22px;
}
.reload {
	position: absolute;
	right: 15px;
	top: 16px;
	width: 20px;
	height: 24px;
}
.sf-right {
	display: flex;
	margin-left: 565px;
	gap: 36px;
}
.sf-right svg {
	width: 36px;
	height: 36px;
}
.tabs {
	display: grid;
	grid-template-columns: repeat(10, 1fr);
	flex: none;
	height: 57px;
	border-top: 2px solid #111;
	background: #1e1e1e;
}
.tab {
	display: flex;
	align-items: center;
	justify-content: center;
	gap: 12px;
	font-size: 22px;
	color: #a5a5a5;
	border-right: 1px solid #444;
}
.tab-active {
	margin-top: -2px;
	color: #f7f7f7;
	background: #3a383b;
	border-right: 0;
}
.fav {
	width: 30px;
	height: 30px;
}
.fav-letter {
	font-size: 22px;
	font-weight: 700;
	fill: #fff;
}
.fav-m {
	height: 28px;
}
.fav-do {
	height: 34px;
}

/* gmail */
.gmail {
	display: grid;
	grid-template-columns: 512px 1fr 112px;
	grid-template-rows: 127px 1fr;
	flex: 1;
	background: linear-gradient(180deg, #f6f8fc 0, #f6f8fc 1340px, #e8e9ee 100%);
}
.gm-brand {
	display: flex;
	align-items: center;
	padding-left: 54px;
}
.gm-menu {
	width: 36px;
	height: 24px;
	fill: #5f6368;
}
.gm-logo {
	width: 60px;
	height: 45px;
	margin-left: 40px;
}
.gm-word {
	margin-left: 21px;
	margin-top: -2px;
	font-family: "Open Sans", sans-serif;
	font-size: 42px;
	color: #5f6368;
}
.gm-head {
	display: flex;
	align-items: center;
	grid-column: 2 / 4;
	padding-bottom: 1px;
}
.searchbar {
	display: flex;
	align-items: center;
	width: 1444px;
	height: 96px;
	padding: 0 39px 0 39px;
	border-radius: 16px;
	background: #e9f1fb;
}
.search-text {
	margin-left: 31px;
	font-family: "Roboto", sans-serif;
	font-size: 32px;
	color: #444746;
}
.ic-tune {
	width: 48px;
	height: 48px;
	margin-left: auto;
}
.gm-actions {
	display: flex;
	align-items: center;
	margin-left: auto;
	margin-right: 36px;
	gap: 44px;
}
.ic {
	flex: none;
	width: 44px;
	height: 44px;
}
.mail-tools .ic,
.subject-actions .ic,
.msg-meta .ic {
	width: 40px;
	height: 40px;
}
.ic-dark {
	fill: #1f1f1f;
}
.ic-navy {
	fill: #0b1f3a;
}
.ic-grey {
	fill: #5f6368;
}
.ic-older {
	fill: #8a8a8a;
}
.ic-stroke {
	stroke: #1f1f1f;
}
.mail-tools .ic-task {
	margin-left: 4px;
}
.avatar {
	display: flex;
	align-items: center;
	justify-content: center;
	flex: none;
	border-radius: 50%;
	color: #fff;
	background: #255798;
	font-family: "Roboto", sans-serif;
}
.avatar-top {
	width: 64px;
	height: 64px;
	margin-left: -2px;
	font-size: 34px;
}

/* left nav */
.nav {
	font-family: "Open Sans", sans-serif;
	color: #1f1f1f;
}
.compose {
	display: flex;
	align-items: center;
	width: 285px;
	height: 112px;
	margin: 16px 0 32px 16px;
	padding-left: 38px;
	border-radius: 32px;
	background: #c8e6fd;
	color: #041e49;
	font-size: 28px;
	font-weight: 500;
}
.nav-ic {
	flex: none;
	width: 38px;
	height: 38px;
	margin-right: 38px;
	fill: #444746;
}
.compose .nav-ic {
	width: 36px;
	height: 36px;
	margin-right: 39px;
}
.nav-list {
	display: flex;
	flex-direction: column;
}
.nav-item {
	display: flex;
	align-items: center;
	height: 64px;
	width: 480px;
	padding-left: 53px;
	font-size: 27px;
	border-radius: 0 32px 32px 0;
}
.is-active {
	font-weight: 700;
	color: #041e49;
	background: #d3e3fd;
}
.labels {
	display: flex;
	align-items: center;
	justify-content: space-between;
	width: 457px;
	margin-top: 52px;
	padding-left: 52px;
	font-size: 33px;
	font-weight: 500;
}
.labels-add {
	width: 28px;
	height: 28px;
}

/* reading panel */
.panel {
	display: flex;
	flex-direction: column;
	height: 1217px;
	border-radius: 32px 32px 0 0;
	background: #fff;
	color: #1f1f1f;
	font-family: "Roboto", sans-serif;
}
.mail-tools {
	display: flex;
	align-items: center;
	flex: none;
	height: 98px;
	padding-left: 8px;
}
.tool {
	display: flex;
	justify-content: center;
	width: 88px;
}
.tool-back {
	margin-right: 24px;
}
.tool-tight {
	margin-left: -7px;
}
.tool-sep {
	width: 2px;
	height: 40px;
	margin: 0 15px;
	background: #eceded;
}
.tool-sep-b {
	margin: 0 18px 0 12px;
}
.pager {
	display: flex;
	align-items: center;
	margin-left: auto;
	margin-right: 65px;
	gap: 40px;
	font-size: 24px;
	letter-spacing: -.5px;
	color: #5e5e5e;
}
.subject-row {
	display: flex;
	align-items: center;
	flex: none;
	height: 132px;
	padding: 0 64px 0 144px;
}
.subject-row h1 {
	margin: 0;
	font-size: 44.300px;
	font-weight: 400;
}
.chip {
	height: 36px;
	margin-left: 22px;
	padding: 0 8px;
	line-height: 36px;
	border-radius: 6px;
	background: #ddd;
	color: #666;
	font-size: 25.500px;
}
.chip em {
	margin-left: 2px;
}
.subject-actions {
	display: flex;
	gap: 32px;
	margin-left: auto;
}
.message {
	display: flex;
	gap: 32px;
	padding: 17px 65px 0 32px;
}
.avatar-msg {
	width: 80px;
	height: 80px;
	margin-top: 2px;
	font-size: 42px;
}
.msg-body {
	flex: 1;
}
.msg-head {
	display: flex;
	align-items: center;
	justify-content: space-between;
	height: 38px;
}
.sender {
	font-size: 24px;
	color: #5e5e5e;
}
.sender b {
	font-size: 30px;
	color: #1f1f1f;
}
.msg-meta {
	display: flex;
	align-items: center;
	margin-top: 2px;
	margin-right: -1px;
}
.clip {
	width: 34px;
	height: 20px;
	margin-right: 14px;
}
.msg-time {
	margin-right: 41px;
	font-size: 25.600px;
	color: #5e5e5e;
}
.msg-meta .ic + .ic {
	margin-left: 40px;
}
.to-me {
	display: flex;
	align-items: center;
	height: 44px;
	font-size: 25px;
	color: #5e5e5e;
}
.caret {
	width: 0;
	height: 0;
	margin-left: 11px;
	border: 8px solid transparent;
	border-top: 9px solid #444;
	border-bottom: 0;
}
.msg-text {
	margin: 14px 0 0;
	font-family: "Liberation Sans", sans-serif;
	font-size: 26px;
	line-height: 40px;
}
.dotted {
	height: 0;
	margin: 67px 0 0;
	border: 0;
	border-top: 2px dotted #ccc;
}
.attachment {
	position: relative;
	display: flex;
	flex-direction: column;
	width: 360px;
	height: 240px;
	margin-top: 33px;
	border: 2px solid #e5e5e5;
}
.att-preview {
	display: flex;
	align-items: center;
	justify-content: center;
	flex: 1;
	background: #fff;
	border-bottom: 2px solid #e5e5e5;
}
.att-doc {
	display: flex;
	flex-direction: column;
	gap: 6px;
	width: 80px;
	height: 80px;
	padding: 18px 14px;
	border-radius: 4px;
	background: #e3e3e3;
}
.att-doc i {
	display: block;
	height: 6px;
	background: #fff;
}
.att-doc i:last-child {
	width: 32px;
}
.att-foot {
	display: flex;
	align-items: center;
	gap: 18px;
	height: 65px;
	padding-left: 20px;
	background: #f4f4f4;
	color: #757575;
	font-size: 25px;
	font-weight: 700;
}
.att-file {
	width: 26px;
	height: 32px;
}
.att-fold {
	position: absolute;
	right: -2px;
	bottom: -2px;
	width: 80px;
	height: 40px;
}
.reply-row {
	display: flex;
	gap: 16px;
	margin-top: 105px;
}
.pill {
	display: flex;
	align-items: center;
	height: 71px;
	padding-bottom: 2px;
	border: 2px solid #757575;
	border-radius: 36px;
	color: #444746;
	font-family: "Open Sans", sans-serif;
	font-size: 28px;
}
.pill svg {
	width: 34px;
	height: 34px;
	stroke: #444746;
}
.pill-reply {
	width: 208px;
	gap: 19px;
	padding-left: 37px;
}
.pill-forward {
	width: 224px;
	gap: 19px;
	padding-left: 28px;
}

/* side rail */
.rail {
	position: relative;
	display: flex;
	flex-direction: column;
	align-items: center;
	padding: 38px 0 0 4px;
}
.rail-ic {
	width: 38px;
	height: 38px;
	margin-bottom: 74px;
}
.rail-sep {
	width: 40px;
	height: 2px;
	margin-top: -4px;
	background: #e1e3e8;
}
.rail-add {
	width: 28px;
	height: 28px;
	margin-top: 72px;
}
.rail-more {
	position: absolute;
	top: 1174px;
	left: 37px;
	width: 36px;
	height: 36px;
	fill: #1f1f1f;
}

/* dock */
.dock {
	position: absolute;
	top: 1668px;
	left: 83px;
	width: 2714px;
	height: 122px;
	display: flex;
	align-items: flex-start;
	padding: 17px 0 0 16px;
	gap: 26.400px;
	border: 2px solid #5d3039;
	border-radius: 26px;
	background: #43151f;
}
.dock-item {
	display: flex;
	flex-direction: column;
	align-items: center;
	gap: 17px;
	width: 74px;
}
.dock-item > svg {
	display: block;
	width: 74px;
	height: 74px;
	overflow: visible;
}
.dock-item.on::after {
	content: "";
	width: 7px;
	height: 7px;
	border-radius: 50%;
	background: #c58a9a;
}
.photos ellipse {
	opacity: .85;
}
.cal-oct {
	font-size: 13px;
	font-weight: 600;
	fill: #fff;
}
.cal-day {
	font-size: 38px;
	font-weight: 300;
	fill: #222;
}
.cal-num {
	font-size: 16px;
	font-weight: 500;
	fill: #4285f4;
}
.map-num {
	font-size: 9px;
	font-weight: 700;
	fill: #fff;
}
.tv-text {
	font-size: 30px;
	font-weight: 600;
	fill: #fff;
}
.dock-sep {
	width: 2px;
	height: 90px;
	margin: -4px 8px 0 11.600px;
	background: #8a6a70;
}
.dock-sep-b {
	margin: -4px 0 0 8.600px;
}
.dock-stack {
	display: flex;
	align-items: flex-start;
	margin-left: 21.600px;
}
.stack-doc {
	width: 48px;
	height: 87px;
	margin-top: -8px;
	margin-right: 33px;
}
.stack-win {
	position: relative;
}
.stack-notes {
	width: 86px;
	height: 57px;
	margin-top: 8px;
	margin-right: 14px;
	background: linear-gradient(90deg, #2f2d30 50%, #1f1f20 50%);
}
.stack-docker {
	width: 85px;
	height: 49px;
	margin-top: 12px;
	background: #1f2a33;
}
.stack-win svg {
	position: absolute;
	width: 26px;
	height: 28px;
}
.stack-notes svg {
	right: 3px;
	bottom: -13px;
}
.stack-docker svg {
	right: 2px;
	bottom: -17px;
}
.trash {
	flex: none;
	width: 64px;
	height: 84px;
	margin-top: -7px;
}
```
